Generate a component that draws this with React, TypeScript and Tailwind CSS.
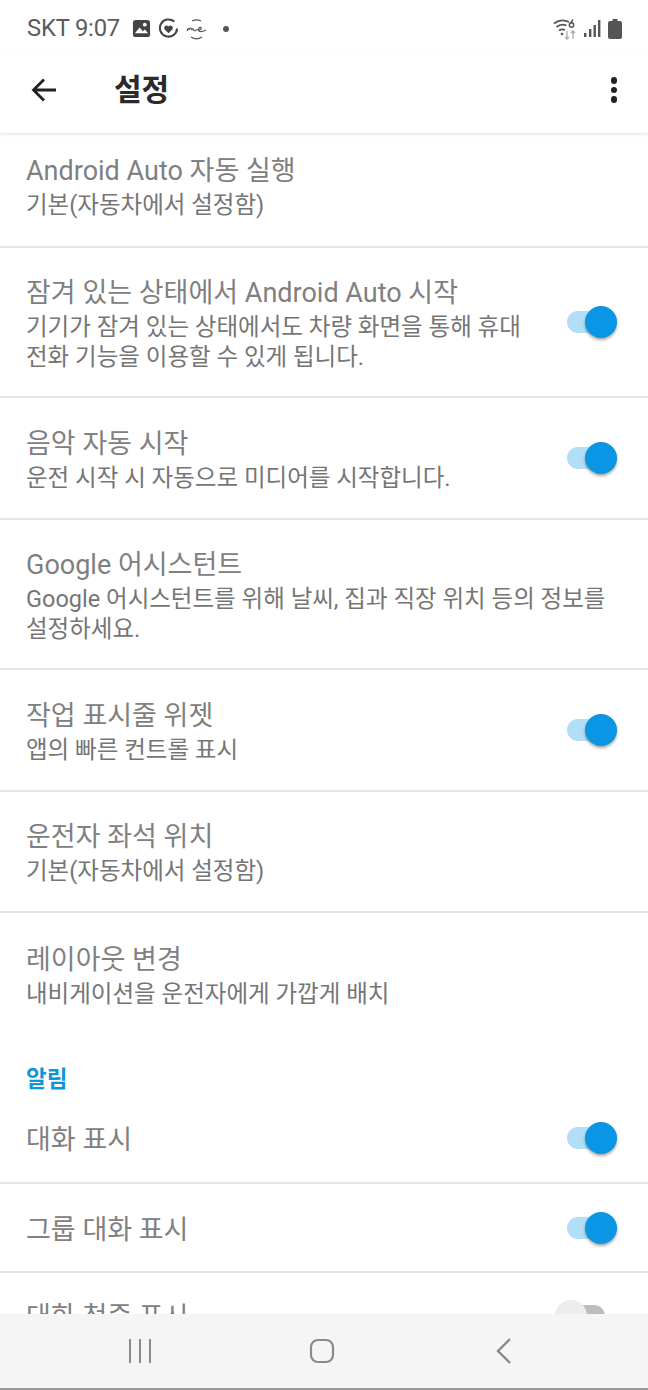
import type { ReactNode } from 'react';

const FONT = "font-['Roboto','Noto_Sans_CJK_KR',sans-serif]";

// Material 스타일 스위치
function Toggle() {
  return (
    <div className="relative h-[22px] w-[50px] shrink-0 rounded-full bg-[#b3def7]">
      <div className="absolute right-0 top-[-5px] h-8 w-8 rounded-full bg-[#0b96e5] shadow-[0_2px_3px_rgba(0,0,0,0.35)]" />
    </div>
  );
}

function Row({
  title,
  sub,
  toggle,
  className = '',
  textClass = 'pt-[3px]',
  border = true,
}: {
  title: string;
  sub?: ReactNode;
  toggle?: boolean;
  className?: string;
  textClass?: string;
  border?: boolean;
}) {
  return (
    <div className={`flex items-center justify-between pl-[26px] pr-[31px] ${border ? 'border-b-2 border-[#e4e4e4]' : ''} ${className}`}>
      <div className={`min-w-0 ${textClass}`}>
        <div className="whitespace-nowrap text-[27px] leading-[34px] text-[#808080]">{title}</div>
        {sub && <div className="mt-[2px] whitespace-nowrap text-[23.5px] leading-[30px] text-[#757575]">{sub}</div>}
      </div>
      {toggle && <Toggle />}
    </div>
  );
}

function StatusBar() {
  return (
    <div className="flex h-[56px] items-center justify-between pl-[27px] pr-[26px] pt-[1px] text-[#5c5c5c]">
      <div className="flex items-center">
        <span className="text-[23.8px] leading-none tracking-[-0.2px]">SKT 9:07</span>
        <svg width="19" height="19" viewBox="0 0 20 20" className="ml-[12px]">
          <rect x="1" y="1" width="18" height="18" rx="3" fill="#444" />
          <circle cx="13.5" cy="6" r="2" fill="#fff" />
          <path d="M3 15l5-6 3.5 4 2-2 3.500 4z" fill="#fff" />
        </svg>
        <svg width="21" height="21" viewBox="0 0 22 22" className="ml-[7px]" fill="none">
          <path d="M17 3.800A9 9 0 1 0 20 11" stroke="#444" strokeWidth="2.200" />
          <path d="M11 16l-4-4a2.500 2.500 0 0 1 4-3 2.500 2.500 0 0 1 4 3z" fill="#444" />
        </svg>
        <svg width="24" height="24" viewBox="0 0 24 24" className="ml-[6px]" fill="none" stroke="#555" strokeWidth="1.200">
          <path d="M7 4a10 10 0 0 1 9 0M6 20a10 10 0 0 0 11 0" />
          <path d="M2 14c.8-3 2-3 2-1 .8-3 2.500-3 2.500 0 .5-1 1.500-2 2 0 1 1.500 2 .5 3-.5M12 12.500c3 1 5-.5 4-2-1.500-1-3.500 2-2 3.500s4 .5 7-1" />
        </svg>
        <div className="ml-[14px] h-[6px] w-[6px] rounded-full bg-[#555]" />
      </div>
      <div className="flex items-center">
        <svg width="26" height="26" viewBox="0 0 26 26" fill="none">
          <path d="M2 7.500a14 14 0 0 1 15-1.500M4.500 11a10 10 0 0 1 10-1.500M7 14.500a6 6 0 0 1 6-.5" stroke="#555" strokeWidth="1.800" />
          <circle cx="10" cy="18" r="1.300" fill="#555" />
          <circle cx="19.500" cy="9" r="2.200" stroke="#555" strokeWidth="1.400" />
          <path d="M21 3.500l-3 4.500" stroke="#555" strokeWidth="1.400" />
          <path d="M15 15v8M13 21l2 2 2-2" stroke="#aaa" strokeWidth="1.300" />
          <path d="M21 23v-8M19 17l2-2 2 2" stroke="#aaa" strokeWidth="1.300" />
        </svg>
        <svg width="18" height="20" viewBox="0 0 18 20" className="ml-[5px]" fill="#555">
          <rect x="1" y="14" width="2.400" height="4" />
          <rect x="6" y="10" width="2.400" height="8" />
          <rect x="10.500" y="6" width="2.400" height="12" />
          <rect x="15" y="1" width="2.400" height="17" />
        </svg>
        <svg width="14" height="20" viewBox="0 0 14 20" className="ml-[7px]" fill="#555">
          <path d="M4.500 0h5v2H12a2 2 0 0 1 2 2v14a2 2 0 0 1-2 2H2a2 2 0 0 1-2-2V4a2 2 0 0 1 2-2h2.500z" />
        </svg>
      </div>
    </div>
  );
}

export default function App() {
  return (
    <div className={`relative flex h-[1390px] w-[648px] flex-col overflow-hidden bg-white ${FONT}`}>
      <StatusBar />
      <header className="relative z-10 flex h-[78px] items-center justify-between border-b border-[#ececec] pb-[9px] pl-[31px] pr-[31px] shadow-[0_1px_3px_rgba(0,0,0,0.08)]">
        <div className="flex items-center">
          <svg width="26" height="26" viewBox="0 0 26 26" fill="none" stroke="#222" strokeWidth="2.800">
            <path d="M25 13H3M13 2.500L2.500 13 13 23.500" />
          </svg>
          <h1 className="ml-[57px] text-[30px] font-bold leading-none text-[#2a2a2a]">설정</h1>
        </div>
        <div className="flex flex-col gap-[3px]">
          <div className="h-[6.500px] w-[6.500px] rounded-full bg-[#222]" />
          <div className="h-[6.500px] w-[6.500px] rounded-full bg-[#222]" />
          <div className="h-[6.500px] w-[6.500px] rounded-full bg-[#222]" />
        </div>
      </header>

      <main className="flex-1 overflow-hidden">
        <Row className="h-[114px]" textClass="pb-[6px]" title="Android Auto 자동 실행" sub="기본(자동차에서 설정함)" />
        <Row
          className="h-[150px]"
          title="잠겨 있는 상태에서 Android Auto 시작"
          sub={<>기기가 잠겨 있는 상태에서도 차량 화면을 통해 휴대<br />전화 기능을 이용할 수 있게 됩니다.</>}
          toggle
        />
        <Row className="h-[122px]" title="음악 자동 시작" sub="운전 시작 시 자동으로 미디어를 시작합니다." toggle />
        <Row
          className="h-[150px]"
          title="Google 어시스턴트"
          sub={<>Google 어시스턴트를 위해 날씨, 집과 직장 위치 등의 정보를<br />설정하세요.</>}
        />
        <Row className="h-[122px]" title="작업 표시줄 위젯" sub="앱의 빠른 컨트롤 표시" toggle />
        <Row className="h-[121px]" title="운전자 좌석 위치" sub="기본(자동차에서 설정함)" />
        <Row className="h-[122px]" border={false} title="레이아웃 변경" sub="내비게이션을 운전자에게 가깝게 배치" />
        <div className="pl-[26px] pt-[29px] text-[22.5px] font-bold leading-[30px] text-[#0b96d8]">알림</div>
        <Row className="h-[90px]" textClass="pt-[4px]" title="대화 표시" toggle />
        <Row className="h-[89px]" textClass="pt-[4px]" title="그룹 대화 표시" toggle />
        <div className="flex items-start justify-between pl-[26px] pr-[43px] pt-[27px]">
          <div className="whitespace-nowrap text-[27px] leading-[34px] text-[#808080]">대화 청중 표시</div>
          <div className="relative mt-[5px] h-[22px] w-[50px] rounded-full bg-[#bdbdbd]">
            <div className="absolute left-0 top-[-5px] h-8 w-8 rounded-full bg-[#ececec]" />
          </div>
        </div>
      </main>

      <nav className="absolute bottom-0 left-0 h-[76px] w-[648px] border-b-2 border-[#9a9a9a] bg-[#f5f5f5] pl-[127px] pt-[24px]">
        <div className="flex items-start">
          <svg width="26" height="26" viewBox="0 0 26 26" stroke="#8a8a8a" strokeWidth="2">
            <path d="M3 1v24M13 1v24M23 1v24" />
          </svg>
          <svg width="26" height="26" viewBox="0 0 26 26" fill="none" stroke="#8a8a8a" strokeWidth="2.200" className="ml-[156px]">
            <rect x="2" y="2" width="22" height="22" rx="7" />
          </svg>
          <svg width="16" height="26" viewBox="0 0 16 26" fill="none" stroke="#8a8a8a" strokeWidth="2.400" className="ml-[161px]">
            <path d="M14 1L2 13l12 12" />
          </svg>
        </div>
      </nav>
    </div>
  );
}
